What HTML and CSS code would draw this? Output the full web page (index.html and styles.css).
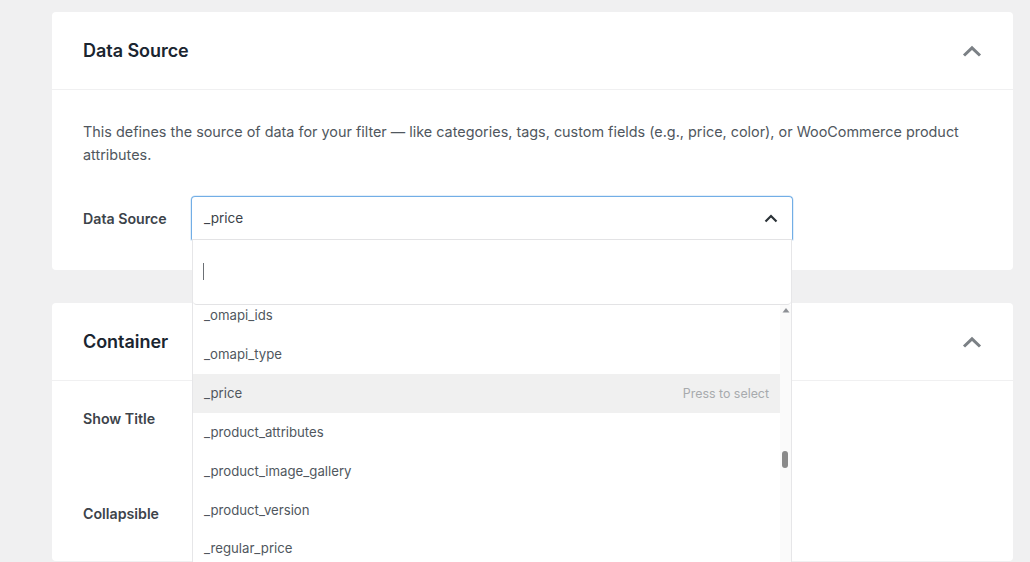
FILE: index.html
```html
<!DOCTYPE html>
<html lang="en">
<head>
<meta charset="utf-8">
<title>Data Source</title>
<link rel="stylesheet" href="styles.css">
</head>
<body>
<div class="page">
  <section class="card">
    <header class="card-head">
      <h2 class="card-title">Data Source</h2>
      <svg class="toggle" width="20" height="12" viewBox="0 0 20 12"><path d="M2 10.5 L10 2.8 L18 10.5" fill="none" stroke="#7b8085" stroke-width="3"/></svg>
    </header>
    <div class="card-body">
      <p class="desc">This defines the source of data for your filter — like categories, tags, custom fields (e.g., price, color), or WooCommerce product attributes.</p>
      <div class="field">
        <label class="field-label">Data Source</label>
        <div class="select-wrap">
          <div class="select">
            <span class="select-value">_price</span>
            <svg class="select-arrow" width="14" height="9" viewBox="0 0 14 9"><path d="M1.5 7.5 L7 2 L12.5 7.5" fill="none" stroke="#2c3338" stroke-width="2.2"/></svg>
          </div>
          <div class="dropdown">
            <div class="search"><span class="caret"></span></div>
            <div class="list-wrap">
              <ul class="list">
                <li class="item">_omapi_ids</li>
                <li class="item">_omapi_type</li>
                <li class="item active"><span>_price</span><span class="hint">Press to select</span></li>
                <li class="item">_product_attributes</li>
                <li class="item">_product_image_gallery</li>
                <li class="item">_product_version</li>
                <li class="item">_regular_price</li>
              </ul>
              <div class="scrollbar">
                <svg class="sb-arrow" width="8" height="6" viewBox="0 0 8 6"><path d="M0.5 5.5 L4 1 L7.5 5.5 Z" fill="#8c8f94"/></svg>
                <div class="sb-thumb"></div>
              </div>
            </div>
          </div>
        </div>
      </div>
    </div>
  </section>

  <section class="card">
    <header class="card-head">
      <h2 class="card-title">Container</h2>
      <svg class="toggle" width="20" height="12" viewBox="0 0 20 12"><path d="M2 10.5 L10 2.8 L18 10.5" fill="none" stroke="#7b8085" stroke-width="3"/></svg>
    </header>
    <div class="card-body rows">
      <div class="row"><span class="field-label">Show Title</span></div>
      <div class="row"><span class="field-label">Collapsible</span></div>
    </div>
  </section>
</div>
</body>
</html>
```

FILE: styles.css
```css
* { box-sizing: border-box; }
html, body { margin: 0; padding: 0; }
body {
  background: #f0f0f1;
  font-family: Inter, "Noto Sans", "Liberation Sans", sans-serif;
  color: #3c434a;
  overflow: hidden;
  height: 562px;
}
.page {
  padding: 12px 17px 0 52px;
  display: flex;
  flex-direction: column;
  gap: 33px;
}
.card {
  background: #fff;
  border-radius: 4px;
  width: 961px;
}
.card-head {
  height: 78px;
  padding: 0 31px;
  display: flex;
  align-items: center;
  justify-content: space-between;
  border-bottom: 1px solid #f0f0f1;
}
.card-title {
  margin: 0;
  font-size: 18px;
  font-weight: 600;
  color: #1a2530;
  letter-spacing: -0.05px;
}
.toggle { display: block; margin-top: 1px; }
.card-body {
  padding: 30px 31px 30px;
}
.desc {
  margin: 0 0 30px;
  font-size: 14.4px;
  line-height: 23px;
  color: #50575e;
}
.field {
  display: flex;
  align-items: center;
}
.field-label {
  width: 108px;
  font-size: 14.2px;
  font-weight: 600;
  color: #3c434a;
}
.select-wrap {
  position: relative;
  width: 602px;
}
.select {
  height: 44px;
  border: 1px solid #72aee6;
  border-bottom-color: #e3e3e5;
  border-radius: 4px 4px 0 0;
  padding: 0 14px 0 12px;
  display: flex;
  align-items: center;
  justify-content: space-between;
  font-size: 13.6px;
  color: #3c434a;
  box-shadow: 0 0 0 0.5px rgba(114,174,230,0.4);
}
.select-arrow { display: block; }
.dropdown {
  position: absolute;
  top: 44px;
  left: 1px;
  width: 600px;
  background: #fff;
  border-left: 1px solid #e6e6e8;
  border-right: 1px solid #e6e6e8;
  z-index: 10;
}
.search {
  height: 65px;
  border-bottom: 1px solid #e3e3e5;
  border-radius: 0 0 4px 4px;
  padding: 23px 0 0 10px;
}
.caret {
  display: block;
  width: 1px;
  height: 17px;
  background: #6c7075;
}
.list-wrap {
  position: relative;
  height: 258px;
  overflow: hidden;
  display: flex;
}
.list {
  list-style: none;
  margin: -9px 0 0;
  padding: 0;
  flex: 1;
}
.item {
  height: 38.85px;
  display: flex;
  align-items: center;
  justify-content: space-between;
  padding: 0 11px 0 11px;
  font-size: 13.2px;
  color: #50575e;
}
.item.active { background: #f0f0f0; }
.hint { font-size: 12.4px; color: #a7aaad; }
.scrollbar {
  width: 11px;
  background: #fafafa;
  position: relative;
  flex: none;
}
.sb-arrow {
  display: block;
  position: absolute;
  top: 2px;
  left: 1.5px;
}
.sb-thumb {
  position: absolute;
  top: 146px;
  left: 2px;
  width: 6px;
  height: 17px;
  border-radius: 3px;
  background: #8a8a8a;
}
.rows { padding: 0 31px; }
.row {
  height: 95px;
  display: flex;
  align-items: center;
}
.rows .row:first-child { margin-top: -10px; }
```
